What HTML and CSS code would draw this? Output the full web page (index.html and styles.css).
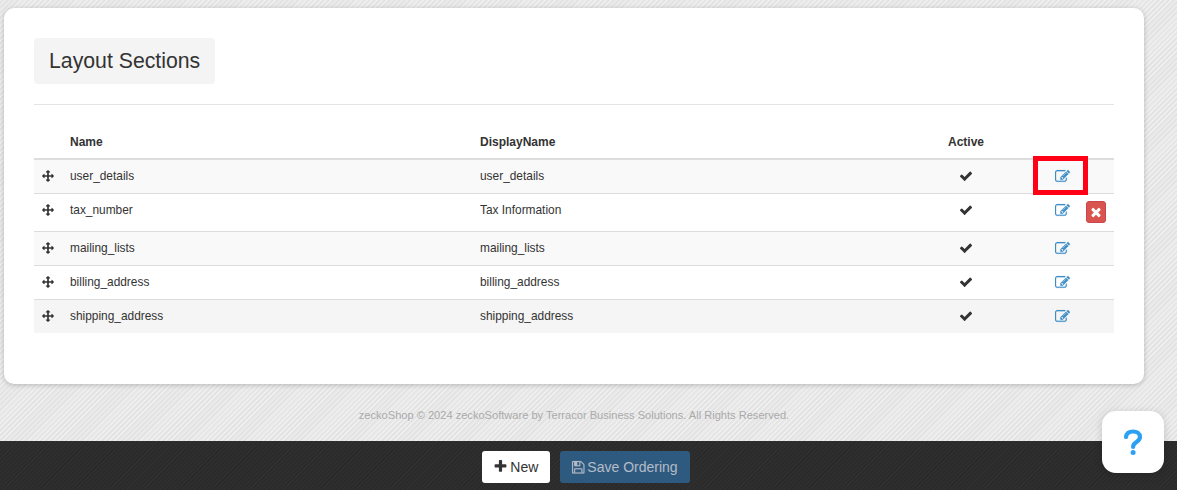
FILE: index.html
```html
<!DOCTYPE html>
<html lang="en">
<head>
<meta charset="utf-8">
<title>Layout Sections</title>
<link rel="stylesheet" href="styles.css">
</head>
<body>
<svg class="defs" width="0" height="0" aria-hidden="true">
  <symbol id="i-move" viewBox="0 0 1792 1792"><path d="M1792 896q0 26-19 45l-256 256q-19 19-45 19t-45-19-19-45v-128h-384v384h128q26 0 45 19t19 45-19 45l-256 256q-19 19-45 19t-45-19l-256-256q-19-19-19-45t19-45 45-19h128v-384h-384v128q0 26-19 45t-45 19-45-19l-256-256q-19-19-19-45t19-45l256-256q19-19 45-19t45 19 19 45v128h384v-384h-128q-26 0-45-19t-19-45 19-45l256-256q19-19 45-19t45 19l256 256q19 19 19 45t-19 45-45 19h-128v384h384v-128q0-26 19-45t45-19 45 19l256 256q19 19 19 45z"/></symbol>
  <symbol id="i-check" viewBox="0 0 1792 1792"><path d="M1671 566q0 40-28 68l-724 724-136 136q-28 28-68 28t-68-28l-136-136-362-362q-28-28-28-68t28-68l136-136q28-28 68-28t68 28l294 295 656-657q28-28 68-28t68 28l136 136q28 28 28 68z"/></symbol>
  <symbol id="i-edit" viewBox="0 0 1792 1792"><path d="M888 1184l116-116-152-152-116 116v56h96v96h56zm440-720q-16-16-33 1l-350 350q-17 17-1 33t33-1l350-350q17-17 1-33zm80 594v190q0 119-84.500 203.500t-203.500 84.500h-832q-119 0-203.500-84.500t-84.500-203.500v-832q0-119 84.500-203.500t203.500-84.500h832q63 0 117 25 15 7 18 23 3 17-9 29l-49 49q-14 14-32 8-23-6-45-6h-832q-66 0-113 47t-47 113v832q0 66 47 113t113 47h832q66 0 113-47t47-113v-126q0-13 9-22l64-64q15-15 35-7t20 29zm-96-738l288 288-672 672h-288v-288zm444 132l-92 92-288-288 92-92q28-28 68-28t68 28l152 152q28 28 28 68t-28 68z"/></symbol>
  <symbol id="i-times" viewBox="0 0 1792 1792"><path d="M1490 1322q0 40-28 68l-136 136q-28 28-68 28t-68-28l-294-294-294 294q-28 28-68 28t-68-28l-136-136q-28-28-28-68t28-68l294-294-294-294q-28-28-28-68t28-68l136-136q28-28 68-28t68 28l294 294 294-294q28-28 68-28t68 28l136 136q28 28 28 68t-28 68l-294 294 294 294q28 28 28 68z"/></symbol>
  <symbol id="i-plus" viewBox="0 0 1792 1792"><path d="M1600 736v192q0 40-28 68t-68 28h-416v416q0 40-28 68t-68 28h-192q-40 0-68-28t-28-68v-416h-416q-40 0-68-28t-28-68v-192q0-40 28-68t68-28h416v-416q0-40 28-68t68-28h192q40 0 68 28t28 68v416h416q40 0 68 28t28 68z"/></symbol>
  <symbol id="i-save" viewBox="0 0 1792 1792"><path d="M512 1536h768v-384h-768v384zm896 0h128v-896q0-14-10-38.500t-20-34.500l-281-281q-10-10-34-20t-39-10v416q0 40-28 68t-68 28h-576q-40 0-68-28t-28-68v-416h-128v1280h128v-416q0-40 28-68t68-28h832q40 0 68 28t28 68v416zm-384-928v-320q0-13-9.500-22.500t-22.500-9.500h-192q-13 0-22.500 9.500t-9.500 22.500v320q0 13 9.500 22.500t22.500 9.500h192q13 0 22.500-9.500t9.500-22.500zm640 32v928q0 40-28 68t-68 28h-1344q-40 0-68-28t-28-68v-1344q0-40 28-68t68-28h928q40 0 88 20t76 48l280 280q28 28 48 76t20 88z"/></symbol>
</svg>

<main class="page">
  <section class="card">
    <h1 class="title">Layout Sections</h1>
    <hr class="rule">
    <table class="grid">
      <thead>
        <tr>
          <th class="c-move"></th>
          <th class="c-name">Name</th>
          <th class="c-display">DisplayName</th>
          <th class="c-active">Active</th>
          <th class="c-edit"></th>
          <th class="c-del"></th>
        </tr>
      </thead>
      <tbody>
        <tr>
          <td><svg class="ico ico-move"><use href="#i-move"/></svg></td>
          <td>user_details</td>
          <td>user_details</td>
          <td class="c-active"><svg class="ico ico-check"><use href="#i-check"/></svg></td>
          <td class="c-edit"><svg class="ico ico-edit"><use href="#i-edit"/></svg><span class="marker"></span></td>
          <td></td>
        </tr>
        <tr>
          <td><svg class="ico ico-move"><use href="#i-move"/></svg></td>
          <td>tax_number</td>
          <td>Tax Information</td>
          <td class="c-active"><svg class="ico ico-check"><use href="#i-check"/></svg></td>
          <td class="c-edit"><svg class="ico ico-edit"><use href="#i-edit"/></svg></td>
          <td class="c-del"><span class="del"><svg class="ico ico-times"><use href="#i-times"/></svg></span></td>
        </tr>
        <tr>
          <td><svg class="ico ico-move"><use href="#i-move"/></svg></td>
          <td>mailing_lists</td>
          <td>mailing_lists</td>
          <td class="c-active"><svg class="ico ico-check"><use href="#i-check"/></svg></td>
          <td class="c-edit"><svg class="ico ico-edit"><use href="#i-edit"/></svg></td>
          <td></td>
        </tr>
        <tr>
          <td><svg class="ico ico-move"><use href="#i-move"/></svg></td>
          <td>billing_address</td>
          <td>billing_address</td>
          <td class="c-active"><svg class="ico ico-check"><use href="#i-check"/></svg></td>
          <td class="c-edit"><svg class="ico ico-edit"><use href="#i-edit"/></svg></td>
          <td></td>
        </tr>
        <tr>
          <td><svg class="ico ico-move"><use href="#i-move"/></svg></td>
          <td>shipping_address</td>
          <td>shipping_address</td>
          <td class="c-active"><svg class="ico ico-check"><use href="#i-check"/></svg></td>
          <td class="c-edit"><svg class="ico ico-edit"><use href="#i-edit"/></svg></td>
          <td></td>
        </tr>
      </tbody>
    </table>
  </section>
  <p class="copyright">zeckoShop © 2024 zeckoSoftware by Terracor Business Solutions. All Rights Reserved.</p>
</main>

<footer class="bar">
  <button class="btn btn-new" type="button"><svg class="ico ico-plus"><use href="#i-plus"/></svg>New</button>
  <button class="btn btn-save" type="button"><svg class="ico ico-save"><use href="#i-save"/></svg>Save Ordering</button>
</footer>

<div class="help">
  <svg class="help-mark" viewBox="0 0 20 28" width="20" height="28" aria-label="Help"><path d="M3 9C3.500 5.300 6.300 3.500 10 3.500c4 0 7 2.200 7 5.500 0 2.600-1.500 3.700-3.500 5-2 1.300-3.400 2.300-3.400 5"/><circle cx="10.100" cy="24.500" r="2.500"/></svg>
</div>
</body>
</html>
```

FILE: styles.css
```css
* { box-sizing: border-box; }

html, body { margin: 0; height: 100%; }

body {
  position: relative;
  height: 490px;
  overflow: hidden;
  display: flex;
  flex-direction: column;
  font-family: "Liberation Sans", Arial, sans-serif;
  font-size: 12px;
  line-height: 17px;
  color: #333;
  background-color: #e9e9e9;
  background-image: repeating-linear-gradient(135deg, #efefef 0 1.2px, #e2e2e2 1.2px 2.4px, #e8e8e8 2.4px 3.6px);
}

.defs { position: absolute; }

.page {
  flex: 1;
  padding: 8px 33px 0 4px;
}

.card {
  position: relative;
  height: 376px;
  padding: 30px 30px 0;
  background: #fff;
  border-radius: 10px;
  box-shadow: 0 1px 5px rgba(0, 0, 0, 0.22);
}

.title {
  display: inline-block;
  margin: 0;
  padding: 12px 15px;
  height: 46px;
  font-size: 21.250px;
  font-weight: 400;
  line-height: 23px;
  color: #333;
  background: #f4f4f4;
  border-radius: 4px;
  vertical-align: top;
}

.rule {
  margin: 20px 0 0;
  border: 0;
  border-top: 1px solid #e4e4e4;
}

.grid {
  width: 1080px;
  margin-top: 20px;
  border-collapse: collapse;
  table-layout: fixed;
}

.grid th {
  padding: 9px 8px 7px;
  text-align: left;
  font-weight: 700;
  color: #333;
  border-bottom: 2px solid #ddd;
}

.grid td {
  padding: 8px;
  font-size: 11.900px;
  vertical-align: top;
  border-top: 1px solid #ddd;
}

.grid tbody tr:first-child td { border-top: 0; }
.grid tbody tr:nth-child(odd) { background: #f9f9f9; }
.grid tbody tr:last-child { background: #f5f5f5; }

.c-move { width: 28px; }
.c-name { width: 410px; }
.c-display { width: 459px; }
.grid .c-active { width: 70px; text-align: center; }
.grid .c-edit { width: 77px; padding-left: 54px; padding-right: 0; }
.grid .c-del { width: 36px; }

.grid td.c-del { padding: 7px 0 8px 8px; }

.ico { display: inline-block; fill: currentColor; vertical-align: top; }
.ico-move { width: 12px; height: 12px; margin-top: 2px; color: #333; }
.ico-check { width: 14px; height: 14px; margin-top: 1px; color: #333; }
.ico-edit { width: 15px; height: 15px; margin-top: 1px; color: #3c8dc5; stroke: currentColor; stroke-width: 20; }
.ico-times { width: 14px; height: 14px; }
.ico-plus { width: 15px; height: 15px; margin: 2px 2.500px 0 -1.500px; }
.ico-save { width: 14.500px; height: 14.500px; margin: 3px 1.500px 0 -1px; stroke: currentColor; stroke-width: 20; }

.del {
  display: flex;
  align-items: center;
  justify-content: center;
  width: 20px;
  height: 22px;
  color: #fff;
  background: #d9534f;
  border: 1px solid #c9444e;
  border-radius: 3px;
}

.marker {
  position: absolute;
  left: 1029px;
  top: 148px;
  width: 55px;
  height: 39px;
  border: 5px solid #ff0016;
}

.copyright {
  margin: 0;
  padding-top: 23px;
  font-size: 11.080px;
  line-height: 16px;
  text-align: center;
  color: #aaa;
  width: 1140px;
}

.bar {
  display: flex;
  justify-content: center;
  gap: 10px;
  flex: none;
  height: 49px;
  padding: 10px 5px 0 0;
  background-color: #2c2c2c;
  background-image: repeating-linear-gradient(135deg, #2f2f2f 0 1.500px, #2a2a2a 1.500px 3px);
}

.btn {
  display: flex;
  align-items: flex-start;
  height: 32px;
  padding: 6px 12px;
  font-family: inherit;
  font-size: 14px;
  line-height: 20px;
  border: 0;
  border-radius: 3px;
}

.btn-new { color: #333; background: #fff; }
.btn-save { color: #b3bcc7; background: #2f5a80; }

.help {
  position: absolute;
  left: 1102px;
  top: 411px;
  width: 62px;
  height: 62px;
  display: flex;
  align-items: center;
  justify-content: center;
  background: #fff;
  border-radius: 14px;
  box-shadow: 0 2px 8px rgba(0, 0, 0, 0.18);
}

.help-mark { fill: #2ba0f4; stroke: none; }
.help-mark path { fill: none; stroke: #2ba0f4; stroke-width: 4.200; stroke-linecap: round; }
```
